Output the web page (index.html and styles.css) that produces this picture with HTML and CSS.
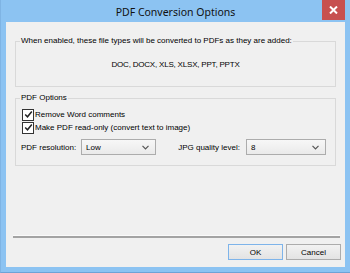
FILE: index.html
```html
<!DOCTYPE html>
<html>
<head>
<meta charset="utf-8">
<link rel="stylesheet" href="styles.css">
</head>
<body>
<div class="window">
  <div class="titlebar">
    <span class="tb-side"></span>
    <span class="title">PDF Conversion Options</span>
    <span class="tb-side tb-right">
      <span class="close">
        <svg width="9" height="8" viewBox="0 0 9 8"><path d="M1 0.5 L8 7.5 M8 0.5 L1 7.5" stroke="#fff" stroke-width="2"/></svg>
      </span>
    </span>
  </div>
  <div class="client">
    <div class="group g1">
      <span class="legend">When enabled, these file types will be converted to PDFs as they are added:</span>
      <div class="types">DOC, DOCX, XLS, XLSX, PPT, PPTX</div>
    </div>
    <div class="group g2">
      <span class="legend">PDF Options</span>
      <div class="check">
        <span class="box"><svg width="9" height="9" viewBox="0 0 9 9"><path d="M1.2 4.5 L3.5 6.8 L7.8 1.5" fill="none" stroke="#222" stroke-width="1.5"/></svg></span>
        <span>Remove Word comments</span>
      </div>
      <div class="check">
        <span class="box"><svg width="9" height="9" viewBox="0 0 9 9"><path d="M1.2 4.5 L3.5 6.8 L7.8 1.5" fill="none" stroke="#222" stroke-width="1.5"/></svg></span>
        <span>Make PDF read-only (convert text to image)</span>
      </div>
      <div class="row">
        <span class="lbl lbl1">PDF resolution:</span>
        <div class="select s1"><span>Low</span><svg width="7" height="5" viewBox="0 0 7 5"><path d="M0.5 0.8 L3.5 3.8 L6.5 0.8" fill="none" stroke="#555" stroke-width="1.2"/></svg></div>
        <span class="lbl lbl2">JPG quality level:</span>
        <div class="select s2"><span>8</span><svg width="7" height="5" viewBox="0 0 7 5"><path d="M0.5 0.8 L3.5 3.8 L6.5 0.8" fill="none" stroke="#555" stroke-width="1.2"/></svg></div>
      </div>
    </div>
    <div class="sep"></div>
    <div class="buttons">
      <span class="btn btn-default">OK</span>
      <span class="btn">Cancel</span>
    </div>
  </div>
</div>
</body>
</html>
```

FILE: styles.css
```css
html, body {
  margin: 0;
  padding: 0;
  background: #8cc3f2;
}
.window {
  width: 350px;
  height: 273px;
  box-sizing: border-box;
  background: #8cc3f2;
  border-left: 1px solid #7fb4e4;
  border-bottom: 1px solid #6ea3d6;
  padding: 0 5px 5px 5px;
  display: flex;
  flex-direction: column;
  font-family: "Liberation Sans", Arial, sans-serif;
  font-size: 8px;
  color: #000;
}
.titlebar {
  height: 22px;
  display: grid;
  grid-template-columns: 1fr auto 1fr;
  align-items: start;
}
.title {
  font-family: "Noto Sans", "Open Sans", sans-serif;
  font-size: 10.5px;
  line-height: 22px;
  color: #111;
  padding-top: 1px;
}
.tb-right {
  display: flex;
  justify-content: flex-end;
}
.close {
  width: 23px;
  height: 20px;
  background: #c75050;
  display: flex;
  align-items: center;
  justify-content: center;
}
.client {
  flex: 1;
  background: #f0f0f0;
  display: flex;
  flex-direction: column;
  padding: 0 0 7px 0;
}
.group {
  border: 1px solid #d9d9d9;
  margin: 0 9px 0 9px;
  display: flex;
  flex-direction: column;
  align-items: flex-start;
}
.g1 {
  margin-top: 19px;
  padding-bottom: 16px;
}
.g2 {
  margin-top: 11px;
  padding: 0 9px 10px 6px;
}
.legend {
  display: block;
  margin: -6px 0 0 4px;
  padding: 0 1px;
  line-height: 10px;
  height: 10px;
  background: #f0f0f0;
  white-space: nowrap;
}
.g2 .legend {
  margin-left: -2px;
}
.types {
  align-self: stretch;
  text-align: center;
  line-height: 10px;
  margin-top: 14px;
  letter-spacing: -0.2px;
}
.check {
  display: flex;
  align-items: center;
  height: 13px;
  line-height: 13px;
  white-space: nowrap;
}
.check:first-of-type {
  margin-top: 5px;
}
.box {
  box-sizing: border-box;
  width: 12px;
  height: 12px;
  border: 1px solid #333;
  background: #fff;
  margin-right: 1px;
  display: flex;
  align-items: center;
  justify-content: center;
}
.row {
  display: flex;
  align-items: center;
  margin-top: 5px;
  margin-left: -1px;
  height: 16px;
  white-space: nowrap;
  align-self: stretch;
}
.lbl1 { width: 60px; }
.lbl2 { margin-left: auto; margin-right: 6px; }
.select {
  box-sizing: border-box;
  height: 16px;
  border: 1px solid #acacac;
  background: linear-gradient(#f7f7f7, #eaeaea);
  display: flex;
  align-items: center;
  justify-content: space-between;
  padding: 0 6px 0 4px;
}
.s1 { width: 75px; }
.s2 { width: 80px; }
.sep {
  margin: auto 5px 0 7px;
  border-top: 1px solid #fafafa;
  height: 2px;
  background: #a3a3a3;
}
.buttons {
  display: flex;
  justify-content: flex-end;
  gap: 3px;
  margin-top: 6px;
  padding-right: 4px;
}
.btn {
  box-sizing: border-box;
  width: 55px;
  height: 16px;
  border: 1px solid #acacac;
  background: linear-gradient(#f2f2f2, #e3e3e3);
  display: flex;
  align-items: center;
  justify-content: center;
}
.btn-default {
  border-color: #7eb4ea;
}
```
